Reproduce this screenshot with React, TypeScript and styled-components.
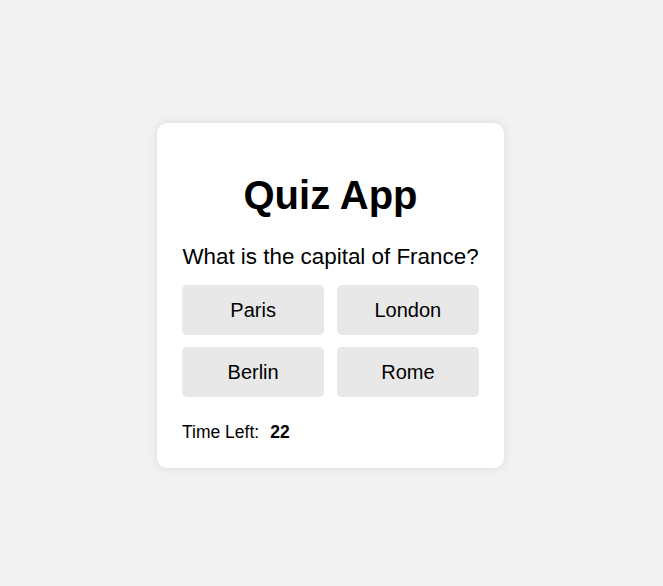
import React from "react";
import styled, { createGlobalStyle } from "styled-components";

const GlobalStyle = createGlobalStyle`
  html, body { margin: 0; padding: 0; background: #f2f2f2; }
  body { font-family: "Liberation Sans", Arial, sans-serif; color: #000; }
`;

const Page = styled.div`
  min-height: 100vh;
  box-sizing: border-box;
  padding: 5px 2px 0 0;
  display: flex;
  align-items: center;
  justify-content: center;
`;

const Card = styled.div`
  width: 297px;
  padding: 25px;
  background: #fff;
  border-radius: 10px;
  box-shadow: 0 0 10px rgba(0, 0, 0, 0.1);
  display: flex;
  flex-direction: column;
`;

const Title = styled.h1`
  margin: 24px 0 0;
  font-size: 40px;
  line-height: 46px;
  font-weight: bold;
  text-align: center;
`;

const Question = styled.p`
  margin: 26px 0 0;
  font-size: 22.4px;
  line-height: 26px;
  text-align: center;
  white-space: nowrap;
`;

const Options = styled.div`
  margin-top: 15px;
  display: grid;
  grid-template-columns: 1fr 1fr;
  column-gap: 12.5px;
  row-gap: 12px;
`;

const OptionButton = styled.button`
  height: 50px;
  border: none;
  border-radius: 5px;
  background: #e8e8e8;
  font-family: "Liberation Sans", Arial, sans-serif;
  font-size: 20px;
  color: #000;
  cursor: pointer;
  padding: 0;
`;

const Timer = styled.div`
  margin-top: 25px;
  font-size: 17.5px;
  line-height: 21px;
  display: flex;
  align-items: baseline;
  gap: 11px;
`;

const TimeValue = styled.span`
  font-weight: bold;
`;

const options = ["Paris", "London", "Berlin", "Rome"];

export default function App() {
  return (
    <>
      <GlobalStyle />
      <Page>
        <Card>
          <Title>Quiz App</Title>
          <Question>What is the capital of France?</Question>
          <Options>
            {options.map((o) => (
              <OptionButton key={o}>{o}</OptionButton>
            ))}
          </Options>
          <Timer>
            <span>Time Left:</span>
            <TimeValue>22</TimeValue>
          </Timer>
        </Card>
      </Page>
    </>
  );
}
